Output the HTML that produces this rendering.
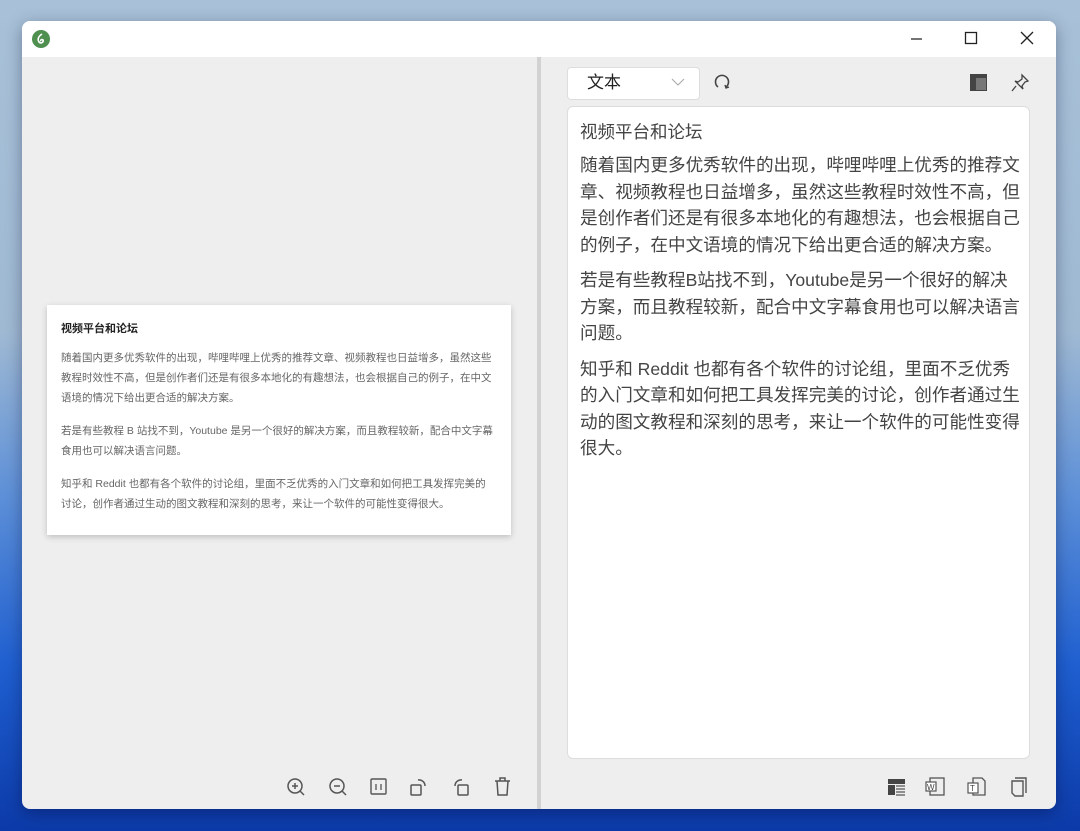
<!DOCTYPE html>
<html><head><meta charset="utf-8"><style>
*{margin:0;padding:0;box-sizing:border-box}
body{width:1080px;height:831px;overflow:hidden;position:relative;font-family:"Liberation Sans","Noto Sans CJK SC",sans-serif;
background:linear-gradient(180deg,#a8c1d8 0%,#9fb9d3 40%,#5c8fd8 60%,#1f5fd0 80%,#0c3aa8 100%);}
.win{position:absolute;left:22px;top:21px;width:1034px;height:788px;background:#eeeeee;border-radius:8px;overflow:hidden;box-shadow:0 4px 16px rgba(0,0,40,.35)}
.title{position:absolute;left:0;top:0;width:100%;height:36px;background:#fff}
.div{position:absolute;left:515px;top:36px;width:4px;bottom:0;background:#d2d2d2}
.card{position:absolute;left:25px;top:284px;width:464px;height:230px;background:#fff;box-shadow:0 2px 6px rgba(0,0,0,.2);padding:14px 14px;font-size:10.5px;color:#666;white-space:nowrap}
.card h4{font-size:11px;color:#222;font-weight:bold;margin-top:3px;margin-bottom:12px;line-height:14px}
.card p{line-height:20px;margin-bottom:13px}
.dd{position:absolute;left:545px;top:46px;width:133px;height:33px;background:#fff;border:1px solid #ddd;border-radius:4px;font-size:17px;color:#222;padding:3px 0 0 19px;line-height:24px}
.box{position:absolute;left:545px;top:85px;width:463px;height:653px;background:#fff;border:1px solid #ddd;border-radius:6px;padding:12px 12px;color:#444;font-size:17.6px;white-space:nowrap}
.box h5{font-weight:normal;font-size:17.5px;line-height:26px;margin-bottom:7px}
.box p{line-height:26.5px;margin-bottom:9px}
svg{position:absolute}
</style></head><body>
<div class="win">
<div class="title">
<svg style="left:9px;top:8px" width="20" height="20" viewBox="0 0 20 20"><circle cx="10" cy="10" r="9" fill="#4f8f4f"/><path d="M11 5c-3 2-5 5-3 8 2 2 5 0 4-2-1-1-3 0-2 1" stroke="#fff" stroke-width="1.6" fill="none"/></svg>
<svg style="left:886px;top:9px" width="18" height="18"><path d="M3 9h11" stroke="#222" stroke-width="1.2"/></svg>
<svg style="left:940px;top:8px" width="18" height="18"><rect x="3.5" y="3.5" width="11" height="11" fill="none" stroke="#222" stroke-width="1.3"/></svg>
<svg style="left:996px;top:8px" width="18" height="18"><path d="M3 3l12 12M15 3L3 15" stroke="#222" stroke-width="1.3"/></svg>
</div>
<div class="div"></div>
<div class="card">
<h4>视频平台和论坛</h4>
<p>随着国内更多优秀软件的出现，哔哩哔哩上优秀的推荐文章、视频教程也日益增多，虽然这些<br>教程时效性不高，但是创作者们还是有很多本地化的有趣想法，也会根据自己的例子，在中文<br>语境的情况下给出更合适的解决方案。</p>
<p>若是有些教程 B 站找不到，Youtube 是另一个很好的解决方案，而且教程较新，配合中文字幕<br>食用也可以解决语言问题。</p>
<p>知乎和 Reddit 也都有各个软件的讨论组，里面不乏优秀的入门文章和如何把工具发挥完美的<br>讨论，创作者通过生动的图文教程和深刻的思考，来让一个软件的可能性变得很大。</p>
</div>
<div class="dd">文本</div>
<svg style="left:649px;top:56px" width="14" height="10"><path d="M1 2l6 6 6-6" stroke="#aaa" fill="none" stroke-width="1.1"/></svg>
<svg style="left:690px;top:51px" width="20" height="20"><path d="M6 15A6.5 6.5 0 1 1 14 15" stroke="#444" stroke-width="1.6" fill="none"/><path d="M13 13l1 3 3-1" stroke="#444" stroke-width="1.4" fill="none"/></svg>
<svg style="left:947px;top:52px" width="20" height="20"><rect x="1" y="1" width="17" height="17" fill="#444"/><rect x="7" y="5" width="10" height="12" fill="#777"/></svg>
<svg style="left:988px;top:52px" width="20" height="20"><path d="M12 2l6 6-3 1-3 4 1 3-8-8 3 1 4-3z" fill="none" stroke="#444" stroke-width="1.3"/><path d="M6 13l-4 5" stroke="#444" stroke-width="1.3"/></svg>
<div class="box">
<h5>视频平台和论坛</h5>
<p>随着国内更多优秀软件的出现，哔哩哔哩上优秀的推荐文<br>章、视频教程也日益增多，虽然这些教程时效性不高，但<br>是创作者们还是有很多本地化的有趣想法，也会根据自己<br>的例子，在中文语境的情况下给出更合适的解决方案。</p>
<p>若是有些教程B站找不到，Youtube是另一个很好的解决<br>方案，而且教程较新，配合中文字幕食用也可以解决语言<br>问题。</p>
<p>知乎和 Reddit 也都有各个软件的讨论组，里面不乏优秀<br>的入门文章和如何把工具发挥完美的讨论，创作者通过生<br>动的图文教程和深刻的思考，来让一个软件的可能性变得<br>很大。</p>
</div>
<svg style="left:263px;top:755px" width="22" height="22"><circle cx="10" cy="10" r="7" fill="none" stroke="#555" stroke-width="1.5"/><path d="M7 10h6M10 7v6M15 15l4 4" stroke="#555" stroke-width="1.5"/></svg>
<svg style="left:305px;top:755px" width="22" height="22"><circle cx="10" cy="10" r="7" fill="none" stroke="#555" stroke-width="1.5"/><path d="M7 10h6M15 15l4 4" stroke="#555" stroke-width="1.5"/></svg>
<svg style="left:346px;top:755px" width="22" height="22"><rect x="3" y="3" width="15" height="15" rx="1" fill="none" stroke="#555" stroke-width="1.4"/><path d="M8 8v6M13 8v6" stroke="#555" stroke-width="1.3"/></svg>
<svg style="left:386px;top:755px" width="22" height="22"><rect x="3" y="9" width="10" height="10" rx="1" fill="none" stroke="#555" stroke-width="1.5"/><path d="M10 4a6 6 0 0 1 7 6" fill="none" stroke="#555" stroke-width="1.5"/></svg>
<svg style="left:428px;top:755px" width="22" height="22"><rect x="8" y="9" width="10" height="10" rx="1" fill="none" stroke="#555" stroke-width="1.5"/><path d="M12 4a6 6 0 0 0 -7 6" fill="none" stroke="#555" stroke-width="1.5"/></svg>
<svg style="left:470px;top:755px" width="22" height="22"><path d="M3 5h15M8 5V2h5v3M5 5l1 14h9l1-14" fill="none" stroke="#555" stroke-width="1.5"/></svg>
<svg style="left:864px;top:755px" width="22" height="22"><rect x="2" y="3" width="17" height="5" fill="#444"/><rect x="2" y="9" width="7" height="10" fill="#444"/><path d="M10 10h9M10 13h9M10 16h9M10 19h9" stroke="#555" stroke-width="1.2"/></svg>
<svg style="left:903px;top:755px" width="22" height="22"><rect x="5" y="2" width="14" height="17" fill="none" stroke="#555" stroke-width="1.3"/><rect x="1" y="6" width="10" height="9" fill="#fff" stroke="#555" stroke-width="1.2"/><text x="2" y="14" font-size="8" font-family="Liberation Sans" fill="#444">W</text></svg>
<svg style="left:944px;top:755px" width="22" height="22"><path d="M7 2h9l3 3v14H7z" fill="none" stroke="#555" stroke-width="1.3"/><rect x="2" y="7" width="10" height="10" fill="#fff" stroke="#555" stroke-width="1.2"/><text x="4" y="15" font-size="8" font-family="Liberation Sans" fill="#444">T</text></svg>
<svg style="left:986px;top:755px" width="22" height="22"><path d="M7 2h11v15" fill="none" stroke="#555" stroke-width="1.4"/><path d="M4 5h11v15H7l-3-3z" fill="none" stroke="#555" stroke-width="1.4"/></svg>
</div>
</body></html>
